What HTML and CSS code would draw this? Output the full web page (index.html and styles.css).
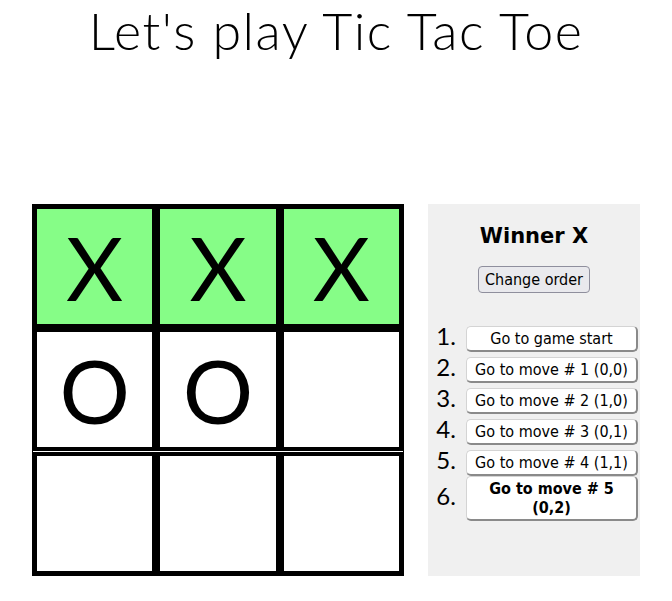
FILE: index.html
```html
<!DOCTYPE html>
<html lang="en">
<head>
<meta charset="utf-8">
<title>Tic Tac Toe</title>
<link rel="stylesheet" href="styles.css">
</head>
<body>
<h1 class="title">Let's play Tic Tac Toe</h1>
<div class="game">
  <div class="board">
    <div class="board-row">
      <button class="square win">X</button>
      <button class="square win">X</button>
      <button class="square win">X</button>
    </div>
    <div class="board-row">
      <button class="square">O</button>
      <button class="square">O</button>
      <button class="square"></button>
    </div>
    <div class="board-row last">
      <button class="square"></button>
      <button class="square"></button>
      <button class="square"></button>
    </div>
  </div>
  <div class="info">
    <div class="status">Winner X</div>
    <button class="toggle">Change order</button>
    <ol class="moves">
      <li><button class="move">Go to game start</button></li>
      <li><button class="move">Go to move # 1 (0,0)</button></li>
      <li><button class="move">Go to move # 2 (1,0)</button></li>
      <li><button class="move">Go to move # 3 (0,1)</button></li>
      <li><button class="move">Go to move # 4 (1,1)</button></li>
      <li><button class="move current">Go to move # 5 (0,2)</button></li>
    </ol>
  </div>
</div>
</body>
</html>
```
FILE: styles.css
```css
html, body {
  margin: 0;
  padding: 0;
  background: #fff;
}
body {
  font-family: Lato, "Open Sans", sans-serif;
  color: #000;
}
.title {
  margin: 0;
  padding-top: 2px;
  text-align: center;
  font-size: 52px;
  font-weight: 300;
  letter-spacing: 1.5px;
  line-height: 56px;
}
.game {
  display: flex;
  justify-content: center;
  align-items: stretch;
  gap: 24px;
  margin-top: 146px;
}
.board {
  width: 372px;
  height: 372px;
  box-sizing: border-box;
  border: 1px solid #000;
  background: #fff;
  display: flex;
  flex-direction: column;
}
.board-row {
  display: flex;
  height: 123px;
}
.board-row.last {
  margin-top: 1px;
}
.square {
  flex: 1 1 0;
  box-sizing: border-box;
  border: 4px solid #000;
  background: #fff;
  margin: 0;
  padding: 0;
  font-family: Lato, sans-serif;
  font-size: 88px;
  line-height: 1;
  color: #000;
}
.square.win {
  background: #86fd87;
}
.info {
  width: 212px;
  background: #f0f0f0;
  display: flex;
  flex-direction: column;
  align-items: center;
}
.status {
  margin-top: 20px;
  font-family: "DejaVu Sans", sans-serif;
  font-weight: 700;
  font-size: 21px;
  line-height: 24px;
}
.toggle {
  margin-top: 18px;
  font-family: "DejaVu Sans Condensed", "DejaVu Sans", sans-serif;
  font-size: 16px;
  padding: 3px 6px;
  background: #e9e9ed;
  border: 1px solid #8f8f9d;
  border-radius: 4px;
  color: #000;
}
.moves {
  align-self: stretch;
  margin: 28px 2px 0 0;
  padding-left: 38px;
  font-family: Lato, sans-serif;
  font-size: 24px;
}
.moves li::marker {
  content: counter(list-item) ". \2006";
}
.moves li {
  height: 31px;
}
.moves li:last-child {
  height: auto;
}
.move {
  width: 100%;
  vertical-align: middle;
  font-family: "DejaVu Sans Condensed", "DejaVu Sans", sans-serif;
  font-size: 16px;
  line-height: 19px;
  padding: 2px 6px;
  background: #fff;
  color: #000;
  border: 1px solid #d4d4d4;
  border-right: 2px solid #8a8a8a;
  border-bottom: 2px solid #8a8a8a;
  border-radius: 5px;
}
.move.current {
  font-weight: 700;
}
```
